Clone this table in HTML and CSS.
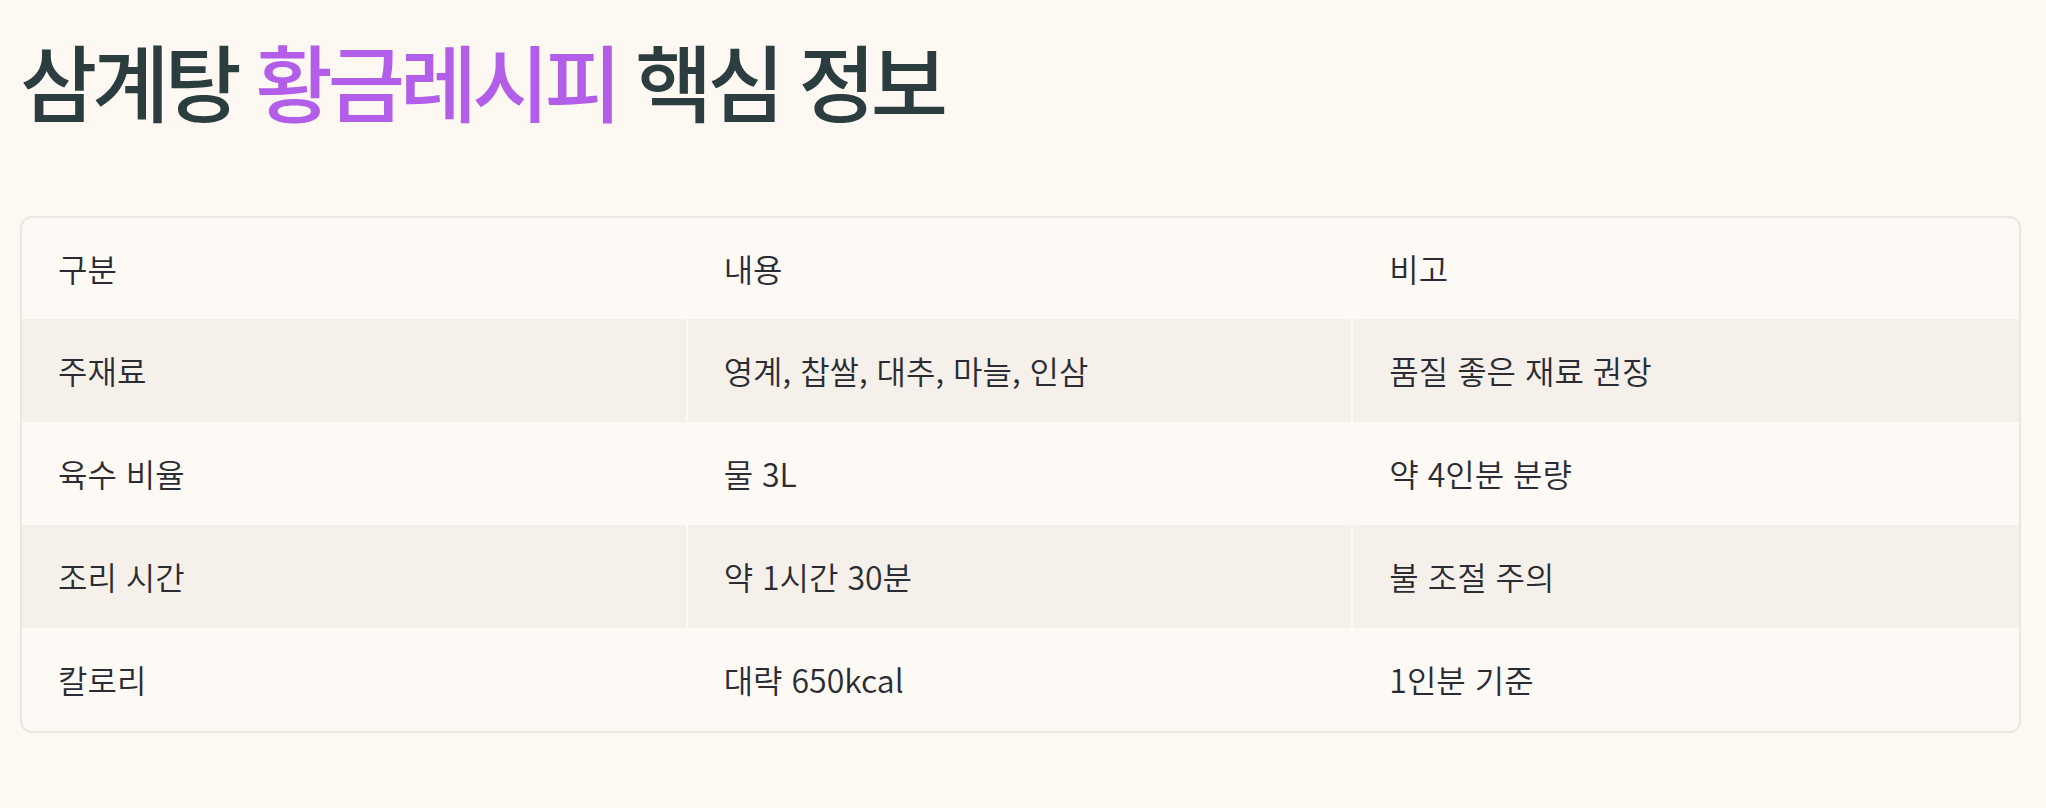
FILE: index.html
```html
<!DOCTYPE html>
<html lang="ko">
<head>
<meta charset="utf-8">
<title>삼계탕 황금레시피 핵심 정보</title>
<link rel="stylesheet" href="styles.css">
</head>
<body>
<main class="page">
  <h1 class="title">삼계탕 <span class="accent">황금레시피</span> 핵심 정보</h1>
  <div class="table-wrap">
    <table class="info">
      <thead>
        <tr><th>구분</th><th>내용</th><th>비고</th></tr>
      </thead>
      <tbody>
        <tr><td>주재료</td><td>영계, 찹쌀, 대추, 마늘, 인삼</td><td>품질 좋은 재료 권장</td></tr>
        <tr><td>육수 비율</td><td>물 3L</td><td>약 4인분 분량</td></tr>
        <tr><td>조리 시간</td><td>약 1시간 30분</td><td>불 조절 주의</td></tr>
        <tr><td>칼로리</td><td>대략 650kcal</td><td>1인분 기준</td></tr>
      </tbody>
    </table>
  </div>
</main>
</body>
</html>
```

FILE: styles.css
```css
html, body {
  margin: 0;
  padding: 0;
  background: #fdf8f2;
}
body {
  font-family: "Noto Sans CJK KR", "Noto Sans", sans-serif;
  color: #2b2c33;
}
.page {
  padding: 22px 25px 0 20px;
}
.title {
  margin: 0;
  font-size: 84px;
  font-weight: 500;
  line-height: 116px;
  letter-spacing: -5px;
  color: #2c3d40;
}
.accent {
  color: #b25ee9;
}
.table-wrap {
  margin-top: 78px;
  border: 2px solid #ebe6e0;
  border-radius: 12px;
  overflow: hidden;
  background: #fdf9f4;
}
.info {
  width: 100%;
  border-collapse: separate;
  border-spacing: 0;
  table-layout: fixed;
}
.info th,
.info td {
  text-align: left;
  font-size: 32px;
  font-weight: 350;
  line-height: 43px;
  padding: 30px 36px;
  border-right: 2px solid #fdf9f4;
}
.info th {
  padding-top: 29px;
  padding-bottom: 29px;
}
.info th:last-child,
.info td:last-child {
  border-right: none;
}
.info tbody tr:nth-child(odd) td {
  background: #f5f0ea;
}
```
